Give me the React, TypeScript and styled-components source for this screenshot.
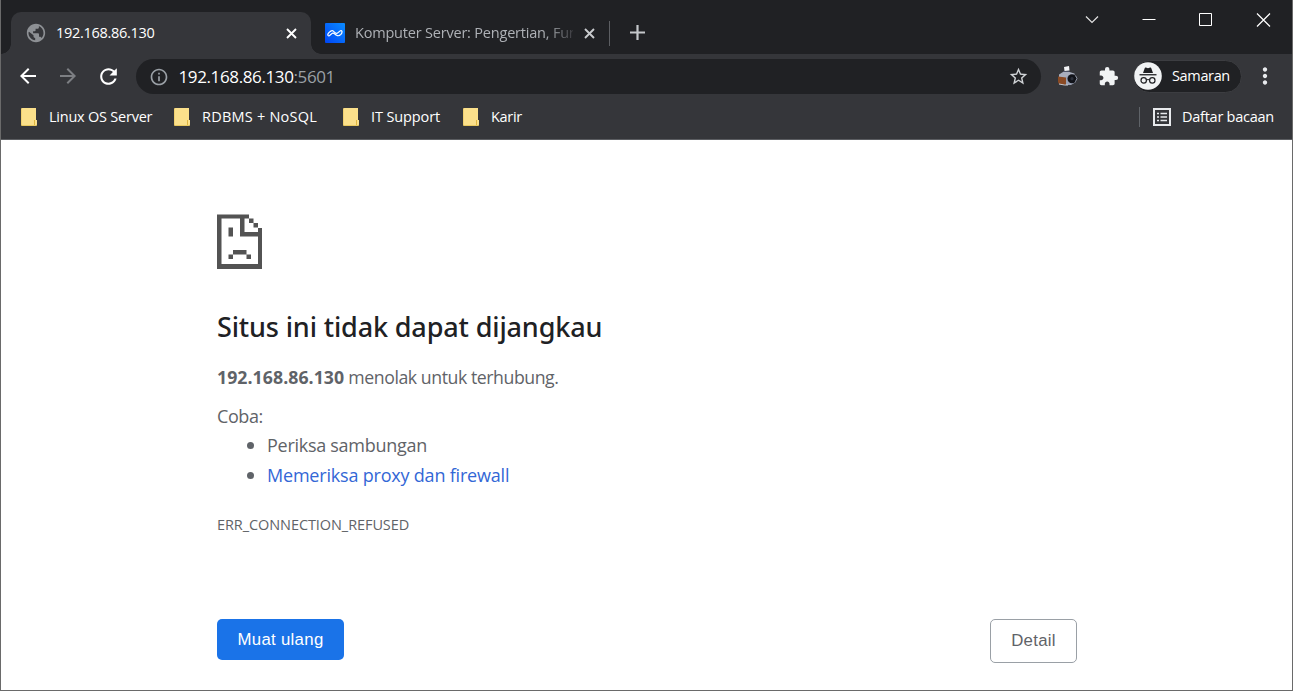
import React from 'react';
import styled, { createGlobalStyle } from 'styled-components';

const ui = `'Segoe UI', 'Open Sans', 'Noto Sans', sans-serif`;

const GlobalStyle = createGlobalStyle`
  * { box-sizing: border-box; }
  body { margin: 0; background: #fff; font-family: ${ui}; }
  svg { display: block; flex: none; }
`;

const Window = styled.div`
  width: 1293px;
  height: 691px;
  display: flex;
  flex-direction: column;
  background: #fff;
  border: 1px solid #6a6a6a;
  border-top: 0;
  overflow: hidden;
`;

const TabStrip = styled.header`
  height: 54px;
  flex: none;
  display: flex;
  align-items: flex-end;
  padding-left: 10px;
  margin: 0 -1px;
  border: 0 solid #202124;
  border-width: 0 1px;
  background: #202124;
`;

const Tab = styled.div<{ $active?: boolean }>`
  position: relative;
  width: ${(p) => (p.$active ? 300 : 297)}px;
  height: 42px;
  display: flex;
  align-items: center;
  padding: ${(p) => (p.$active ? '0 13.5px 0 15px' : '0 12px 0 14px')};
  border-radius: 10px 10px 0 0;
  background: ${(p) => (p.$active ? '#35363a' : 'transparent')};
  color: ${(p) => (p.$active ? '#fff' : '#aeb1b6')};
`;

const TabFoot = styled.i<{ $side: 'left' | 'right' }>`
  position: absolute;
  bottom: 0;
  ${(p) => p.$side}: -10px;
  width: 10px;
  height: 10px;
  background: radial-gradient(
    circle at ${(p) => (p.$side === 'left' ? '0 0' : '100% 0')},
    transparent 9.5px,
    #35363a 10px
  );
`;

const Label = styled.span<{ $size?: number; $track?: number }>`
  font-size: ${(p) => p.$size ?? 14.5}px;
  letter-spacing: ${(p) => p.$track ?? 0}px;
  line-height: 20px;
  white-space: nowrap;
`;

const TabTitle = styled(Label)<{ $fade?: boolean }>`
  flex: 1;
  min-width: 0;
  overflow: hidden;
  margin-left: 10px;
  margin-right: 10px;
  ${(p) => p.$fade && 'mask-image: linear-gradient(90deg, #000 190px, transparent 224px);'}
`;

const TabDivider = styled.span`
  width: 1px;
  height: 25px;
  margin-bottom: 8px;
  margin-left: 1px;
  background: #5c5e62;
`;

const NewTab = styled.span`
  margin: 0 0 13px 19px;
`;

const WindowControls = styled.div`
  align-self: flex-start;
  margin: 12px 21px 0 auto;
  display: flex;
  gap: 42px;
  & > :nth-child(3) { margin: 0 1px; }
`;

const Toolbar = styled.nav`
  height: 44px;
  flex: none;
  margin: 0 -1px;
  display: flex;
  align-items: center;
  padding: 0 15px 0 16px;
  background: #35363a;
`;

const NavButtons = styled.div`
  display: flex;
  gap: 16px;
  width: 120px;
`;

const Omnibox = styled.div`
  width: 905px;
  height: 35px;
  margin-top: 1px;
  border-radius: 18px;
  background: #202124;
  color: #fff;
  display: flex;
  align-items: center;
  padding: 0 12px 0 12.5px;
  & > svg:last-child { margin-left: auto; }
`;

const Host = styled(Label)`
  margin-left: 10px;
`;

const Port = styled(Label)`
  color: #9aa0a6;
`;

const Extensions = styled.div`
  display: flex;
  align-items: center;
  gap: 20px;
  margin-left: 17px;
`;

const Profile = styled.div`
  height: 33px;
  width: 109px;
  margin-left: 14px;
  border-radius: 17px;
  border: 1px solid #3c3d41;
  background: #202124;
  color: #fff;
  display: flex;
  align-items: center;
  gap: 10px;
`;

const Menu = styled.span`
  margin-left: auto;
`;

const Bookmarks = styled.nav`
  height: 42px;
  flex: none;
  display: flex;
  align-items: center;
  padding: 0 18px 4px 20px;
  background: #35363a;
  border-bottom: 1px solid #5b5d61;
  color: #fff;
`;

const Bookmark = styled.div<{ $width: number }>`
  width: ${(p) => p.$width}px;
  display: flex;
  align-items: center;
  gap: 12px;
`;

const Folder = styled.i`
  width: 16px;
  height: 18px;
  flex: none;
  background: linear-gradient(#dfb63f, #dfb63f) 13px 12px / 1px 5px no-repeat,
    linear-gradient(#35363a, #35363a) 100% 0 / 1px 12px no-repeat, #fbe08b;
  border-radius: 1px;
  box-shadow: inset 0 -1px #e9c95f, inset 1px 0 #f0d070;
`;

const ReadingList = styled.div`
  margin-left: auto;
  display: flex;
  align-items: center;
  gap: 11px;
  padding-left: 13px;
  border-left: 1px solid #5f6368;
`;

const Page = styled.main`
  flex: 1;
  padding: 74px 215px 0 216px;
  color: #5f6368;
`;

const Heading = styled.h1`
  margin: 41px 0 0;
  color: #202124;
  font: 500 27px/34px 'Noto Sans', ${ui};
  letter-spacing: -0.14px;
`;

const Summary = styled.p`
  margin: 19px 0 0;
  font-size: 17.7px;
  line-height: 28px;
  letter-spacing: -0.44px;
`;

const HostName = styled.strong`
  font-weight: 700;
  letter-spacing: 0.06px;
`;

const Try = styled.p`
  margin: 11px 0 0;
  font-size: 18px;
  line-height: 28px;
  letter-spacing: -0.4px;
`;

const Suggestions = styled.ul`
  margin: 0;
  padding-left: 30px;
  list-style: none;
  font-size: 18px;
  line-height: 30px;
  letter-spacing: -0.28px;
`;

const Suggestion = styled.li`
  display: flex;
  align-items: center;
  gap: 13px;
  &::before {
    content: '';
    width: 7px;
    height: 7px;
    border-radius: 50%;
    background: #5f6368;
  }
`;

const Link = styled.a`
  color: #3367d6;
  letter-spacing: -0.2px;
`;

const ErrorCode = styled.p`
  margin: 25px 0 0;
  font-size: 14.5px;
  line-height: 20px;
  letter-spacing: -0.08px;
`;

const Actions = styled.div`
  display: flex;
  justify-content: space-between;
  align-items: flex-start;
  margin-top: 84px;
`;

const Button = styled.button<{ $primary?: boolean }>`
  width: ${(p) => (p.$primary ? 127 : 87)}px;
  height: ${(p) => (p.$primary ? 41 : 44)}px;
  padding: 0;
  border: ${(p) => (p.$primary ? '0' : '1px solid #9aa0a6')};
  border-radius: 5px;
  background: ${(p) => (p.$primary ? '#1a73e8' : '#fff')};
  color: ${(p) => (p.$primary ? '#fff' : '#5f6368')};
  font: 16.8px 'Liberation Sans', Arial, sans-serif;
  letter-spacing: 0.3px;
`;

const Close = ({ color }: { color: string }) => (
  <svg width="13" height="13" viewBox="0 0 13 13" stroke={color} strokeWidth="1.9">
    <path d="M2 2l9 9M11 2l-9 9" />
  </svg>
);

const Material = ({ d, size, color }: { d: string; size: number; color: string }) => (
  <svg width={size} height={size} viewBox="0 0 24 24" fill={color}>
    <path d={d} />
  </svg>
);

const ICON = {
  globe:
    'M12 1C5.9 1 1 5.900 1 12s4.900 11 11 11 11-4.900 11-11S18.100 1 12 1zM3.600 10.600L9 14.800v1.200c0 1.100.9 2 2 2v2.600c-4.500-.5-8-4.100-8-8.600 0-.5.2-1 .6-1.400zM18.600 18c-.3-.9-1-1.600-2-1.600h-1v-3c0-.6-.5-1-1-1H8.500v-2.400h2c.6 0 1-.4 1-1V7h2c1.100 0 2-.9 2-2v-1.300c3.300 1.400 5.500 4.600 5.500 8.300 0 2.300-.9 4.400-2.400 6z',
  back: 'M20 11H7.83l5.59-5.59L12 4l-8 8 8 8 1.41-1.41L7.83 13H20v-2z',
  forward: 'M12 4l-1.41 1.41L16.17 11H4v2h12.17l-5.58 5.59L12 20l8-8z',
  reload:
    'M17.65 6.35C16.2 4.9 14.21 4 12 4c-4.42 0-7.99 3.58-7.99 8s3.57 8 7.99 8c3.73 0 6.84-2.55 7.73-6h-2.08c-.82 2.33-3.04 4-5.65 4-3.31 0-6-2.69-6-6s2.69-6 6-6c1.66 0 3.14.69 4.22 1.78L13 11h7V4l-2.35 2.35z',
  info: 'M11 7h2v2h-2zm0 4h2v6h-2zm1-9C6.48 2 2 6.48 2 12s4.48 10 10 10 10-4.48 10-10S17.52 2 12 2zm0 18c-4.41 0-8-3.59-8-8s3.59-8 8-8 8 3.59 8 8-3.59 8-8 8z',
  star: 'M22 9.24l-7.19-.62L12 2 9.19 8.63 2 9.24l5.46 4.73L5.82 21 12 17.27 18.18 21l-1.63-7.03L22 9.24zM12 15.4l-3.76 2.27 1-4.28-3.32-2.88 4.38-.38L12 6.1l1.71 4.04 4.38.38-3.32 2.88 1 4.28L12 15.4z',
  puzzle:
    'M20.5 11H19V7c0-1.1-.9-2-2-2h-4V3.5a2.5 2.5 0 0 0-5 0V5H4c-1.1 0-1.99.9-1.99 2v3.8H3.5c1.49 0 2.7 1.21 2.7 2.7s-1.21 2.7-2.7 2.7H2V20c0 1.1.9 2 2 2h3.8v-1.5c0-1.49 1.21-2.7 2.7-2.7s2.7 1.21 2.7 2.7V22H17c1.1 0 2-.9 2-2v-4h1.5a2.5 2.5 0 0 0 0-5z',
  dots: 'M12 8c1.1 0 2-.9 2-2s-.9-2-2-2-2 .9-2 2 .9 2 2 2zm0 2c-1.1 0-2 .9-2 2s.9 2 2 2 2-.9 2-2-.9-2-2-2zm0 6c-1.1 0-2 .9-2 2s.9 2 2 2 2-.9 2-2-.9-2-2-2z',
};

const SiteLogo = () => (
  <svg width="20" height="20" viewBox="0 0 20 20">
    <defs>
      <linearGradient id="logo" x1="0" y1="1" x2="1" y2="0">
        <stop offset="0" stopColor="#0045f5" />
        <stop offset="1" stopColor="#0a8cff" />
      </linearGradient>
    </defs>
    <rect width="20" height="20" rx="1" fill="url(#logo)" />
    <path
      d="M3 12.400c-1-1.300 2.700-5 4.300-4.700 1.700.3 2.900 3 4.500 2.700 1.300-.2 2.700-2.700 4.200-2.700 1.700 0 1 2.500-.1 3.700-1.300 1.300-2.900 1.700-4.300.9-1.600-.9-2.500-2.400-3.900-2.100-1.600.4-3.400 3.800-4.700 2.200z"
      fill="none" stroke="#fff" strokeWidth="1.200"
    />
  </svg>
);

const Camera = () => (
  <svg width="20" height="20" viewBox="0 0 20 20">
    <path d="M6 1l5-1 .5 4.500-5 .5z" fill="#f3f4f6" />
    <path d="M5 5h6.500v2H5z" fill="#4b5064" />
    <path d="M1 8.500l4-2.500h6.500l5 1.500v3l-6 2-9.500-1z" fill="#a9aebd" />
    <path d="M0 10.500l8 1v7l-1.500.5-5.500-1-1-2z" fill="#8a4a24" />
    <path d="M8 11l5-3 5 2v6l-5 3H8z" fill="#9aa1b4" />
    <circle cx="14" cy="12.700" r="4.500" fill="#111319" />
    <path d="M17.500 9.500l1.500 3-1.500 3" stroke="#8d93a1" fill="none" />
    <circle cx="14" cy="12.700" r="1.600" fill="#2b303b" />
    <path d="M1 18l5.500 1H10" stroke="#c6cad2" fill="none" />
  </svg>
);

const Incognito = () => (
  <svg width="28" height="28" viewBox="0 0 28 28">
    <circle cx="14" cy="14" r="13.800" fill="#f1f3f4" />
    <path d="M10.700 6.200q.3-.9 1.200-.6l2.100.6 2.100-.6q.9-.3 1.200.6l1.700 4.800H9z" fill="#202124" />
    <path d="M5.500 12.100h17v1.300h-17z" fill="#202124" />
    <g fill="none" stroke="#202124" strokeWidth="1.200">
      <circle cx="9.700" cy="18.400" r="2.700" />
      <circle cx="18.300" cy="18.400" r="2.700" />
      <path d="M12.400 18q1.600-1 3.200 0" />
    </g>
  </svg>
);

const SadPage = () => (
  <svg width="46" height="55" viewBox="0 0 46 55" fill="#535353">
    <path d="M0 .5h32v4H4.500v45.500h36.500V22.500H23V4.500h4.500V18H41v-4h4v41H0z" />
    <path d="M32 4.500h4.500V9H32zM36.500 9H41v4.500h-4.500zM11.500 13.500h4.500v9h-4.500zM16 36h13.500v4.500H16zM11.500 40.500H16V45h-4.500zM29.500 40.500H34V45h-4.500z" />
  </svg>
);

const bookmarks = [
  { name: 'Linux OS Server', width: 153, track: -0.23 },
  { name: 'RDBMS + NoSQL', width: 169, track: 0.22 },
  { name: 'IT Support', width: 120, track: -0.12 },
  { name: 'Karir', width: 80, track: -0.3 },
];

export default function App() {
  return (
    <>
      <GlobalStyle />
      <Window>
        <TabStrip>
          <Tab $active>
            <TabFoot $side="left" />
            <TabFoot $side="right" />
            <Material d={ICON.globe} size={20} color="#8d9094" />
            <TabTitle $track={-0.3}>192.168.86.130</TabTitle>
            <Close color="#fff" />
          </Tab>
          <Tab>
            <SiteLogo />
            <TabTitle $fade $track={-0.2}>Komputer Server: Pengertian, Fungsi</TabTitle>
            <Close color="#c9cbce" />
          </Tab>
          <TabDivider />
          <NewTab>
            <svg width="17" height="17" stroke="#c4c7ca" strokeWidth="2.200">
              <path d="M8.500 1v15M1 8.500h15" />
            </svg>
          </NewTab>
          <WindowControls>
            <svg width="16" height="15" stroke="#e3e3e3" fill="none" strokeWidth="1.200">
              <path d="M2 4.500l6 6 6-6" />
            </svg>
            <svg width="14" height="15" stroke="#fff" fill="none">
              <path d="M.5 7.500h13" />
            </svg>
            <svg width="14" height="15" stroke="#fff" fill="none">
              <path d="M.5 1.500h12v12H.5z" />
            </svg>
            <svg width="15" height="15" stroke="#fff" fill="none" strokeWidth="1.200">
              <path d="M1 1.500l13 13M14 1.500l-13 13" />
            </svg>
          </WindowControls>
        </TabStrip>
        <Toolbar>
          <NavButtons>
            <Material d={ICON.back} size={24} color="#fff" />
            <Material d={ICON.forward} size={24} color="#7d7f83" />
            <Material d={ICON.reload} size={25} color="#fff" />
          </NavButtons>
          <Omnibox>
            <Material d={ICON.info} size={20} color="#9aa0a6" />
            <Host $size={17} $track={-0.38}>192.168.86.130</Host>
            <Port $size={17} $track={-0.38}>:5601</Port>
            <Material d={ICON.star} size={21} color="#d0d3d6" />
          </Omnibox>
          <Extensions>
            <Camera />
            <Material d={ICON.puzzle} size={21} color="#f1f3f4" />
          </Extensions>
          <Profile>
            <Incognito />
            <Label $track={-0.35}>Samaran</Label>
          </Profile>
          <Menu>
            <Material d={ICON.dots} size={26} color="#e8eaed" />
          </Menu>
        </Toolbar>
        <Bookmarks>
          {bookmarks.map((b) => (
            <Bookmark key={b.name} $width={b.width}>
              <Folder />
              <Label $track={b.track}>{b.name}</Label>
            </Bookmark>
          ))}
          <ReadingList>
            <svg width="18" height="20" viewBox="0 0 18 20" fill="none" stroke="#e8eaed" strokeWidth="2">
              <path d="M1 2h16v16H1z" />
              <path d="M4 6.500h2M4 10h2M4 13.500h2M7.500 6.500H14M7.500 10H14M7.500 13.500H14" strokeWidth="1.700" />
            </svg>
            <Label $track={-0.25}>Daftar bacaan</Label>
          </ReadingList>
        </Bookmarks>
        <Page>
          <SadPage />
          <Heading>Situs ini tidak dapat dijangkau</Heading>
          <Summary>
            <HostName>192.168.86.130</HostName> menolak untuk terhubung.
          </Summary>
          <Try>Coba:</Try>
          <Suggestions>
            <Suggestion>Periksa sambungan</Suggestion>
            <Suggestion>
              <Link>Memeriksa proxy dan firewall</Link>
            </Suggestion>
          </Suggestions>
          <ErrorCode>ERR_CONNECTION_REFUSED</ErrorCode>
          <Actions>
            <Button $primary>Muat ulang</Button>
            <Button>Detail</Button>
          </Actions>
        </Page>
      </Window>
    </>
  );
}
